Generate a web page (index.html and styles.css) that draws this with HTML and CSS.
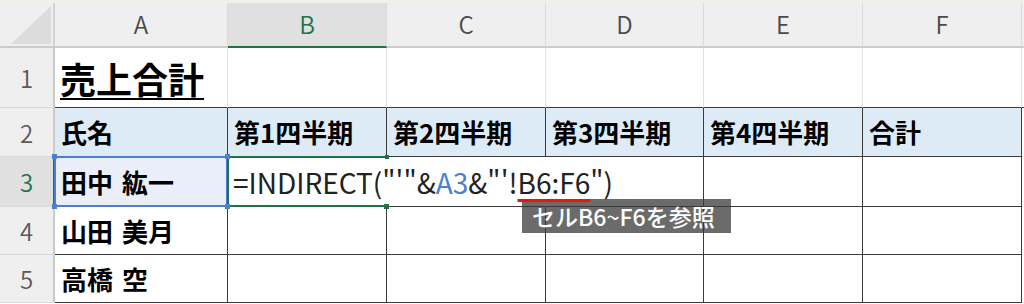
FILE: index.html
```html
<!DOCTYPE html>
<html lang="ja">
<head>
<meta charset="utf-8">
<title>売上合計</title>
<link rel="stylesheet" href="styles.css">
</head>
<body>
<div class="app">
  <div class="topband"></div>
  <div class="sheet">
    <div class="corner"><svg class="tri" width="40" height="38" viewBox="0 0 40 38"><polygon points="0,38 40,0 40,38" fill="#dcdcdc"/></svg></div>
    <div class="ch">A</div>
    <div class="ch sel">B</div>
    <div class="ch">C</div>
    <div class="ch">D</div>
    <div class="ch">E</div>
    <div class="ch">F</div>
    <div class="ch fill"></div>

    <div class="rh">1</div>
    <div class="c r1 title"><span class="u">売上合計</span></div>
    <div class="c r1"></div>
    <div class="c r1"></div>
    <div class="c r1"></div>
    <div class="c r1"></div>
    <div class="c r1"></div>
    <div class="c r1 fill"></div>

    <div class="rh">2</div>
    <div class="c t hd">氏名</div>
    <div class="c t hd">第1四半期</div>
    <div class="c t hd">第2四半期</div>
    <div class="c t hd">第3四半期</div>
    <div class="c t hd">第4四半期</div>
    <div class="c t hd">合計</div>
    <div class="c fill"></div>

    <div class="rh sel">3</div>
    <div class="c t refA">田中 紘一<span class="h h1"></span><span class="h h2"></span><span class="h h3"></span><span class="h h4"></span></div>
    <div class="c t edit"><span class="formula">=INDIRECT("'"&amp;<span class="ref">A3</span>&amp;"'!<span class="rng">B6:F6</span>")</span><span class="gh gh1"></span><span class="gh gh2"></span></div>
    <div class="c t ov"></div>
    <div class="c t"></div>
    <div class="c t"></div>
    <div class="c t"></div>
    <div class="c fill"></div>

    <div class="rh">4</div>
    <div class="c t">山田 美月</div>
    <div class="c t"></div>
    <div class="c t"></div>
    <div class="c t"></div>
    <div class="c t"></div>
    <div class="c t"></div>
    <div class="c fill"></div>

    <div class="rh">5</div>
    <div class="c t">高橋 空</div>
    <div class="c t"></div>
    <div class="c t"></div>
    <div class="c t"></div>
    <div class="c t"></div>
    <div class="c t"></div>
    <div class="c fill"></div>
  </div>
  <div class="tip">セルB6~F6を参照</div>
</div>
</body>
</html>
```
FILE: styles.css
```css
* { box-sizing: border-box; }
html, body { margin: 0; padding: 0; }
body {
  width: 1024px;
  height: 304px;
  overflow: hidden;
  background: #ffffff;
  font-family: "Noto Sans CJK JP", "Noto Sans", sans-serif;
}
.app { position: relative; width: 1024px; height: 304px; }
.topband { height: 3px; background: #f3efea; }
.sheet {
  display: grid;
  grid-template-columns: 55px 173px 159px 159px 158px 159px 159px 1fr;
  grid-template-rows: 45px 60px 49px 50px 48px 48px;
}
.corner {
  background: #efefef;
  border-right: 2px solid #d2d2d2;
  border-bottom: 2px solid #cbcbcb;
  display: flex;
  align-items: flex-end;
  justify-content: flex-end;
  padding: 0 2px 2px 0;
}
.tri { display: block; }
.ch {
  background: #efefef;
  border-right: 1px solid #d9d9d9;
  border-bottom: 2px solid #cbcbcb;
  display: flex;
  align-items: center;
  justify-content: center;
  font-size: 24px;
  font-weight: 350;
  color: #4a4a4a;
  padding-bottom: 2px;
}
.ch.sel { background: #e0e0e0; color: #217346; border-bottom-color: #217346; }
.ch.fill { border-right: none; }
.rh {
  background: #efefef;
  border-right: 2px solid #cbcbcb;
  border-bottom: 1px solid #d9d9d9;
  display: flex;
  align-items: center;
  justify-content: center;
  font-size: 24px;
  font-weight: 350;
  color: #5a5a5a;
}
.rh.sel { background: #e0e0e0; color: #217346; border-right-color: #217346; }
.c {
  border-right: 1px solid #e2e2e2;
  border-bottom: 1px solid #e2e2e2;
  display: flex;
  align-items: center;
  padding-left: 6px;
  font-size: 26px;
  font-weight: 700;
  color: #000000;
  white-space: nowrap;
  word-spacing: 3px;
}
.c.fill { border-right: none; }
.r1 { border-bottom-color: #3a3a3a; }
.title { font-size: 36px; padding-left: 5px; }
.title .u {
  text-decoration: underline;
  text-decoration-thickness: 2px;
  text-underline-offset: 4px;
}
.t { border-right-color: #3a3a3a; border-bottom-color: #3a3a3a; }
.hd { background: #ddebf7; padding-bottom: 2px; }
.refA { position: relative; background: #e9eef8; }
.refA::after {
  content: "";
  position: absolute;
  left: -1px; top: -1px; right: -1px; bottom: -1px;
  border: 2px solid #4a7fd4;
}
.h {
  position: absolute;
  width: 5px; height: 5px;
  background: #4a7fd4;
  z-index: 3;
}
.h1 { left: -3px; top: -3px; }
.h2 { right: -3px; top: -3px; }
.h3 { left: -3px; bottom: -3px; }
.h4 { right: -3px; bottom: -3px; }
.c.t.edit {
  position: relative;
  z-index: 2;
  overflow: visible;
  font-weight: 400;
  font-size: 28px;
  color: #222222;
  padding-left: 5px;
  word-spacing: 0;
  border-right-color: transparent;
}
.edit::after {
  content: "";
  position: absolute;
  left: -1px; top: -1px; right: -1px; bottom: -1px;
  border: 2px solid #217346;
  border-right: none;
}
.gh {
  position: absolute;
  right: -3px;
  width: 4px; height: 4px;
  background: #217346;
}
.gh1 { top: -2px; }
.gh2 { bottom: -3px; width: 5px; height: 5px; }
.ref { color: #4a7fd4; }
.rng {
  text-decoration: underline;
  text-decoration-color: #ee1111;
  text-decoration-thickness: 3px;
  text-underline-offset: 5px;
}
.c.t.ov { border-right-color: transparent; }
.tip {
  position: absolute;
  left: 522px;
  top: 199px;
  width: 209px;
  height: 34px;
  background: rgba(58, 58, 58, 0.75);
  color: #ffffff;
  font-size: 23px;
  font-weight: 500;
  line-height: 34px;
  padding-left: 10px;
  white-space: nowrap;
}
```
